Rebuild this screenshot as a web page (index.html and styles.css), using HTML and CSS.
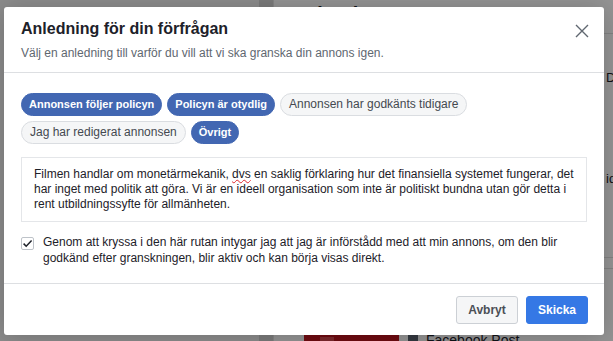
FILE: index.html
```html
<!DOCTYPE html>
<html>
  <head>
    <title>Anledning för din förfrågan</title>
    <link rel="stylesheet" href="styles.css">
  </head>
  <body>
    <div class="page">
      <div class="page-left"></div>
      <div class="page-rail"></div>
      <div class="page-main">
        <div class="page-title">Identitet</div>
        <div class="page-spacer"></div>
        <div class="page-post">
          <div class="post-thumb"><span class="post-thumb-mark"></span></div>
          <div class="post-label"><span class="post-icon"></span>Facebook Post</div>
        </div>
      </div>
      <div class="page-right">
        <div class="right-line"></div>
        <div class="right-letter first">D</div>
        <div class="right-letter second">id</div>
        <div class="right-line low"></div>
        <div class="right-line lower"></div>
      </div>
    </div>
    <div class="overlay"></div>

    <div class="modal">
      <div class="modal-header">
        <h2>Anledning för din förfrågan</h2>
        <p>Välj en anledning till varför du vill att vi ska granska din annons igen.</p>
        <button class="close" aria-label="Stäng">
          <svg width="14" height="14" viewBox="0 0 14 14">
            <path d="M1 1 L13 13 M13 1 L1 13" stroke="#606770" stroke-width="1.4" fill="none" />
          </svg>
        </button>
      </div>
      <div class="modal-body">
        <div class="chips">
          <span class="chip selected">Annonsen följer policyn</span>
          <span class="chip selected">Policyn är otydlig</span>
          <span class="chip">Annonsen har godkänts tidigare</span>
          <span class="chip">Jag har redigerat annonsen</span>
          <span class="chip selected">Övrigt</span>
        </div>
        <div class="reason-text">Filmen handlar om monetärmekanik, <span class="misspelled">dvs</span> en saklig förklaring hur det finansiella systemet fungerar, det har inget med politik att göra. Vi är en ideell organisation som inte är politiskt bundna utan gör detta i rent utbildningssyfte för allmänheten.</div>
        <label class="confirm">
          <span class="checkbox">
            <svg width="13" height="13" viewBox="0 0 13 13">
              <path d="M2.6 6.6 L5.2 9.2 L10.6 3.6" stroke="#1d2129" stroke-width="1.5" fill="none" />
            </svg>
          </span>
          <span class="confirm-text">Genom att kryssa i den här rutan intygar jag att jag är införstådd med att min annons, om den blir godkänd efter granskningen, blir aktiv och kan börja visas direkt.</span>
        </label>
      </div>
      <div class="modal-footer">
        <button class="btn">Avbryt</button>
        <button class="btn primary">Skicka</button>
      </div>
    </div>
  </body>
</html>
```

FILE: styles.css
```css
body {
  margin: 0;
  font-family: "Liberation Sans", Arial, sans-serif;
  width: 613px;
  height: 341px;
  overflow: hidden;
  position: relative;
}
.page {
  display: flex;
  height: 341px;
  background: #fff;
}
.page-left {
  width: 259px;
  background: #f2f2f2;
}
.page-rail {
  width: 14px;
  background: #d4d4d4;
  border-right: 1px solid #e6e6e6;
  margin-right: 13px;
}
.page-main {
  flex: 1;
  display: flex;
  flex-direction: column;
}
.page-title {
  font-size: 20px;
  font-weight: bold;
  color: #1d2129;
  margin: 3px 0 0 18px;
}
.page-spacer {
  flex: 1;
}
.page-post {
  display: flex;
  align-items: flex-start;
  gap: 9px;
  height: 6px;
}
.post-thumb {
  width: 95px;
  height: 20px;
  margin-left: 17px;
  background: #c0141e;
}
.post-thumb-mark {
  display: block;
  width: 14px;
  height: 6px;
  margin-left: 16px;
  margin-top: 2px;
  background: #d8474f;
}
.post-label {
  display: flex;
  gap: 8px;
  font-size: 14px;
  color: #1d2129;
  margin-top: -3px;
}
.post-icon {
  width: 10px;
  height: 14px;
  margin-top: 2px;
  background: #5a636e;
}
.page-right {
  width: 9px;
  position: relative;
  background: #fff;
}
.right-letter {
  position: absolute;
  left: 2px;
  font-size: 13px;
  color: #1d2129;
}
.right-letter.first {
  top: 70px;
}
.right-letter.second {
  top: 171px;
}
.right-line {
  position: absolute;
  left: 0;
  right: 0;
  top: 33px;
  border-top: 1px solid #e0e0e0;
}
.right-line.low {
  top: 257px;
}
.right-line.lower {
  top: 268px;
}
.overlay {
  position: absolute;
  inset: 0;
  background: rgba(0, 0, 0, 0.42);
}
.modal {
  position: absolute;
  left: 4px;
  top: 7px;
  width: 600px;
  background: #fff;
  border-radius: 3px;
  box-shadow: 0 2px 26px rgba(0, 0, 0, 0.2);
  color: #1d2129;
}
.modal-header {
  position: relative;
  padding: 12px 17px 11px;
  border-bottom: 1px solid #dddfe2;
}
.modal-header h2 {
  margin: 0;
  font-size: 16px;
  line-height: 20px;
  font-weight: bold;
  color: #1d2129;
}
.modal-header p {
  margin: 6px 0 0;
  font-size: 12px;
  line-height: 16px;
  color: #606770;
}
.close {
  position: absolute;
  right: 12px;
  top: 14px;
  width: 20px;
  height: 20px;
  padding: 0;
  border: 0;
  background: none;
  display: flex;
  align-items: center;
  justify-content: center;
}
.modal-body {
  padding: 20px 17px 17px;
}
.chips {
  display: flex;
  flex-wrap: wrap;
  gap: 5px;
}
.chip {
  height: 23px;
  box-sizing: border-box;
  padding: 0 8px;
  border-radius: 12px;
  border: 1px solid #dadde1;
  background: #f5f6f7;
  color: #444950;
  font-size: 12px;
  line-height: 21px;
}
.chip.selected {
  padding: 0 7px;
  background: #4267b2;
  border-color: #4267b2;
  color: #fff;
  font-size: 11px;
  font-weight: bold;
}
.reason-text {
  margin-top: 13px;
  border: 1px solid #e4e6e9;
  padding: 9px 12px;
  font-size: 12px;
  line-height: 15px;
  color: #1d2129;
}
.misspelled {
  text-decoration: underline wavy #e0262b;
  text-decoration-thickness: 1px;
}
.confirm {
  display: flex;
  gap: 9px;
  margin-top: 12px;
  font-size: 12px;
  line-height: 16px;
}
.checkbox {
  flex: none;
  width: 13px;
  height: 13px;
  box-sizing: border-box;
  margin-top: 3px;
  border: 1px solid #bec3c9;
  border-radius: 2px;
  display: flex;
  align-items: center;
  justify-content: center;
}
.checkbox svg {
  flex: none;
}
.modal-footer {
  display: flex;
  justify-content: flex-end;
  gap: 8px;
  padding: 12px 16px 11px;
  border-top: 1px solid #dddfe2;
}
.btn {
  height: 28px;
  width: 62px;
  border: 1px solid #ccd0d5;
  border-radius: 3px;
  background: #f5f6f7;
  color: #4b4f56;
  font-family: "Liberation Sans", Arial, sans-serif;
  font-size: 12px;
  font-weight: bold;
}
.btn.primary {
  background: #3578e5;
  border-color: #3578e5;
  color: #fff;
}
```
